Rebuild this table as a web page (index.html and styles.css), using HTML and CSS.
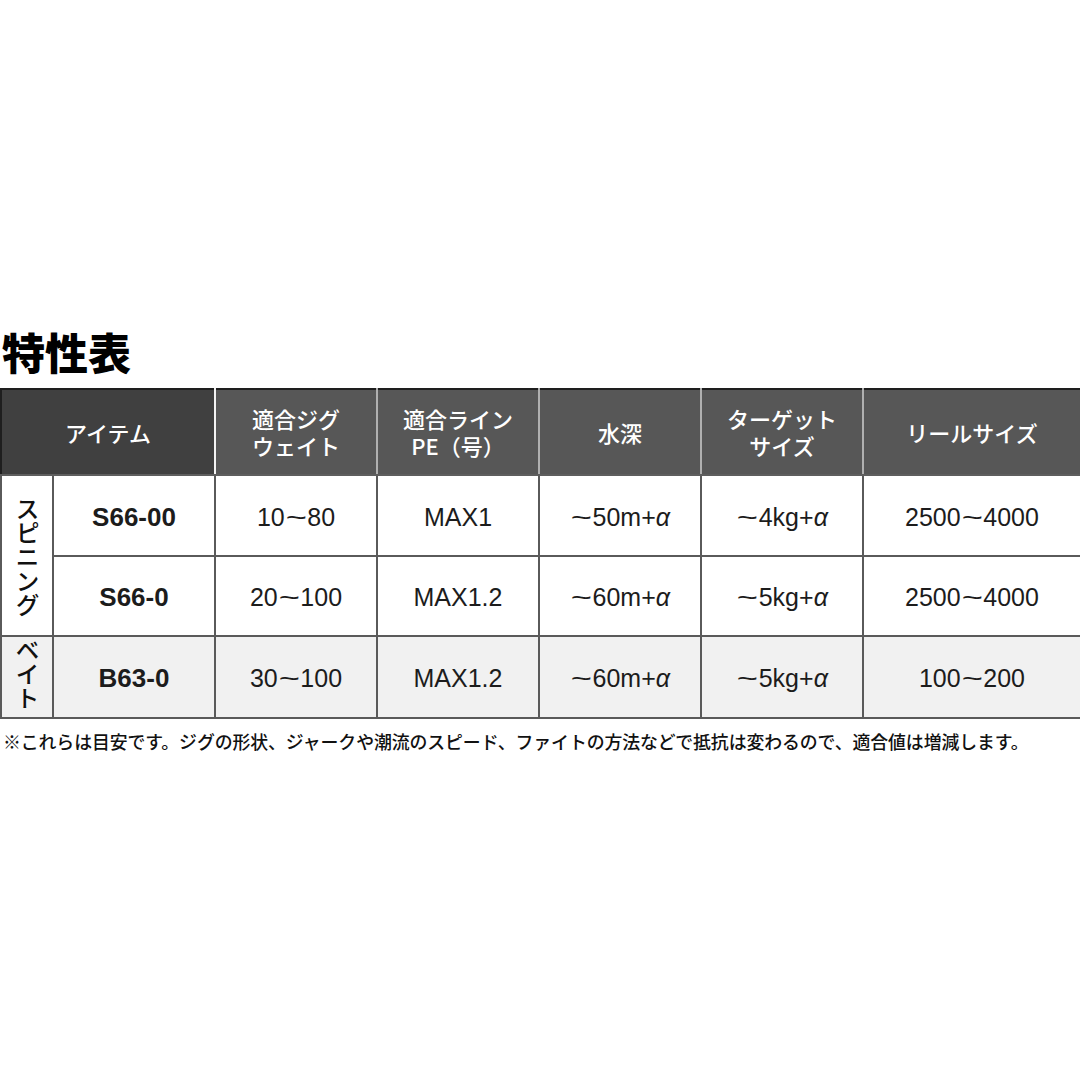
FILE: index.html
```html
<!DOCTYPE html>
<html lang="ja">
<head>
<meta charset="utf-8">
<link rel="stylesheet" href="styles.css">
</head>
<body>
<div class="page">
  <h1 class="title">特性表</h1>
  <table class="spec">
    <colgroup>
      <col class="c-grp"><col class="c-name"><col class="c-std"><col class="c-std"><col class="c-std"><col class="c-std"><col class="c-last">
    </colgroup>
    <thead>
      <tr>
        <th colspan="2" class="h-item">アイテム</th>
        <th class="h-first">適合ジグ<br>ウェイト</th>
        <th>適合ライン<br>PE（号）</th>
        <th>水深</th>
        <th>ターゲット<br>サイズ</th>
        <th>リールサイズ</th>
      </tr>
    </thead>
    <tbody>
      <tr class="r1">
        <td rowspan="2" class="grp"><span class="vert">スピニング</span></td>
        <td class="name">S66-00</td>
        <td>10<span class="tl">~</span>80</td>
        <td>MAX1</td>
        <td><span class="tl">~</span>50m+<span class="al">α</span></td>
        <td><span class="tl">~</span>4kg+<span class="al">α</span></td>
        <td>2500<span class="tl">~</span>4000</td>
      </tr>
      <tr class="r2">
        <td class="name">S66-0</td>
        <td>20<span class="tl">~</span>100</td>
        <td>MAX1.2</td>
        <td><span class="tl">~</span>60m+<span class="al">α</span></td>
        <td><span class="tl">~</span>5kg+<span class="al">α</span></td>
        <td>2500<span class="tl">~</span>4000</td>
      </tr>
      <tr class="r3 bait">
        <td class="grp"><span class="vert">ベイト</span></td>
        <td class="name">B63-0</td>
        <td>30<span class="tl">~</span>100</td>
        <td>MAX1.2</td>
        <td><span class="tl">~</span>60m+<span class="al">α</span></td>
        <td><span class="tl">~</span>5kg+<span class="al">α</span></td>
        <td>100<span class="tl">~</span>200</td>
      </tr>
    </tbody>
  </table>
  <p class="note">※これらは目安です。ジグの形状、ジャークや潮流のスピード、ファイトの方法などで抵抗は変わるので、適合値は増減します。</p>
</div>
</body>
</html>
```

FILE: styles.css
```css
html, body {
  margin: 0;
  padding: 0;
  background: #ffffff;
}
body {
  width: 1080px;
  height: 1080px;
  font-family: "Liberation Sans", "Noto Sans CJK JP", sans-serif;
  color: #1c1c1c;
}
.page {
  padding-top: 326px;
}
.title {
  margin: 0 0 12px 2px;
  font-family: "Noto Sans CJK JP", sans-serif;
  font-weight: 900;
  font-size: 43px;
  line-height: 50px;
  color: #000;
}
.spec {
  width: 1080px;
  border-collapse: collapse;
  table-layout: fixed;
  border: 2px solid #1e1e1e;
}
.c-grp { width: 52px; }
.c-name { width: 162px; }
.c-std { width: 162px; }
.c-last { width: 218px; }

.spec th {
  height: 84px;
  padding: 0;
  background: #575757;
  color: #ffffff;
  font-family: "Noto Sans CJK JP", sans-serif;
  font-weight: 500;
  font-size: 22px;
  line-height: 27px;
  text-align: center;
  vertical-align: middle;
  border-left: 2px solid #b0b0b0;
  border-bottom: 2px solid #5e5e5e;
}
.spec th.h-item {
  background: #404040;
  border-left: 0;
}
.spec th.h-first {
  border-left: 2px solid #f4f4f4;
}
.spec td {
  padding: 2px 0 0 0;
  text-align: center;
  vertical-align: middle;
  font-size: 25px;
  line-height: 30px;
  color: #1c1c1c;
  border: 2px solid #5a5a5a;
}
.spec tr.r1 td { height: 77px; }
.spec tr.r2 td { height: 76px; }
.spec tr.r3 td { height: 78px; }
.spec tr.r3 td {
  background: #f1f1f1;
  border-top: 2px solid #2a2a2a;
}
.spec td.name {
  font-weight: 700;
  font-size: 26px;
}
.spec td.grp {
  padding: 0;
}
.tl {
  display: inline-block;
  transform: scaleX(1.45);
  margin: 0 4px;
}
.al {
  font-style: italic;
}
.vert {
  display: inline-block;
  writing-mode: vertical-rl;
  font-family: "Noto Sans CJK JP", sans-serif;
  font-weight: 500;
  font-size: 24px;
  line-height: 28px;
  color: #111;
}
.spec tr.r1 td.grp .vert { margin-top: 8px; }
.note {
  margin: 10px 0 0 3px;
  font-family: "Noto Sans CJK JP", sans-serif;
  font-size: 17.9px;
  line-height: 24px;
  font-weight: 500;
  color: #111;
  white-space: nowrap;
  letter-spacing: -0.1px;
}
```
